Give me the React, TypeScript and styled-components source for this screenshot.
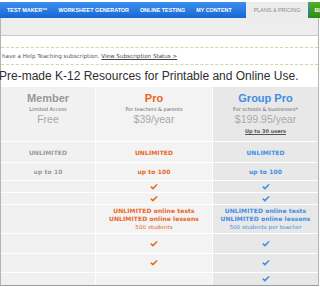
import React from 'react';
import styled, { createGlobalStyle } from 'styled-components';

const GlobalStyle = createGlobalStyle`
  html, body {
    margin: 0;
    padding: 0;
    background: #ffffff;
  }
  body {
    font-family: "DejaVu Sans", Verdana, sans-serif;
  }
`;

type Tone = 'member' | 'pro' | 'group';

const tones: Record<Tone, { bg: string; fg: string }> = {
  member: { bg: '#f1f1f1', fg: '#9a9a9a' },
  pro: { bg: '#f3f3f3', fg: '#e8661c' },
  group: { bg: '#e8e8e8', fg: '#3d8de4' },
};

function Check({ color }: { color: string }) {
  return (
    <svg width="8" height="6" viewBox="0 0 8 6">
      <path d="M0.3 3.2 L2.9 5.8 L7.7 0.7 L6.6 0 L2.9 3.5 L1.5 2.1 Z" fill={color} />
    </svg>
  );
}

function App() {
  const rows: { h: number; cells: (React.ReactNode | null)[] }[] = [
    { h: 21, cells: ['UNLIMITED', 'UNLIMITED', 'UNLIMITED'] },
    { h: 18, cells: ['up to 10', 'up to 100', 'up to 100'] },
    { h: 12, cells: [null, 'check', 'check'] },
    { h: 12, cells: [null, 'check', 'check'] },
    {
      h: 29,
      cells: [
        null,
        <>
          <Strong>UNLIMITED online tests</Strong>
          <Strong>UNLIMITED online lessons</Strong>
          <Small>500 students</Small>
        </>,
        <>
          <Strong>UNLIMITED online tests</Strong>
          <Strong>UNLIMITED online lessons</Strong>
          <Small>500 students per teacher</Small>
        </>,
      ],
    },
    { h: 20, cells: [null, 'check', 'check'] },
    { h: 19, cells: [null, 'check', 'check'] },
    { h: 13, cells: [null, null, 'check'] },
  ];
  const order: Tone[] = ['member', 'pro', 'group'];

  return (
    <>
      <GlobalStyle />
      <Page>
        <Nav>
          <Tab>TEST MAKER™</Tab>
          <Tab>WORKSHEET GENERATOR</Tab>
          <Tab>ONLINE TESTING</Tab>
          <Tab>MY CONTENT</Tab>
          <ActiveTab>PLANS &amp; PRICING</ActiveTab>
          <GreenTab>BL</GreenTab>
        </Nav>
        <Frame>
          <SubBar />
          <Spacer />
          <Notice>
            have a Help Teaching subscription. <NoticeLink>View Subscription Status &gt;</NoticeLink>
          </Notice>
          <Heading>Pre-made K-12 Resources for Printable and Online Use.</Heading>
          <Table>
            <HeadCell $tone="member">
              <PlanName $tone="member">Member</PlanName>
              <PlanFor>Limited Access</PlanFor>
              <Price>Free</Price>
            </HeadCell>
            <HeadCell $tone="pro">
              <PlanName $tone="pro">Pro</PlanName>
              <PlanFor>For teachers &amp; parents</PlanFor>
              <Price>$39/year</Price>
            </HeadCell>
            <HeadCell $tone="group">
              <PlanName $tone="group">Group Pro</PlanName>
              <PlanFor>For schools &amp; businesses*</PlanFor>
              <Price>$199.95/year</Price>
              <Users>Up to 30 users</Users>
            </HeadCell>
            {rows.map((row, ri) =>
              row.cells.map((c, ci) => (
                <Cell key={`${ri}-${ci}`} $tone={order[ci]} $h={row.h}>
                  {c === 'check' ? <Check color={tones[order[ci]].fg} /> : c}
                </Cell>
              )),
            )}
          </Table>
        </Frame>
      </Page>
    </>
  );
}
export default App;

const Page = styled.div`
  width: 320px;
  height: 287px;
  overflow: hidden;
  padding-top: 2px;
  box-sizing: border-box;
  background: #ffffff;
`;
const Nav = styled.div`
  height: 16px;
  display: flex;
  align-items: stretch;
  background: linear-gradient(#3c8ff0, #1a66d2);
  padding-left: 7px;
`;
const Tab = styled.div`
  display: flex;
  align-items: center;
  color: #ffffff;
  font-family: "Liberation Sans", Arial, sans-serif;
  font-weight: bold;
  font-size: 5.4px;
  margin-right: 11px;
  white-space: nowrap;
`;
const ActiveTab = styled.div`
  display: flex;
  align-items: center;
  background: #ececec;
  color: #8a8a8a;
  font-family: "Liberation Sans", Arial, sans-serif;
  font-size: 5.4px;
  padding: 0 8px;
  margin-left: 3px;
  white-space: nowrap;
`;
const GreenTab = styled.div`
  display: flex;
  align-items: center;
  flex: 1;
  background: linear-gradient(#4fb321, #2f8c10);
  color: #ffffff;
  font-family: "Liberation Sans", Arial, sans-serif;
  font-weight: bold;
  font-size: 5.4px;
  padding-left: 5px;
  margin-left: 1px;
  overflow: hidden;
`;
const Frame = styled.div`
  width: 319px;
  height: 268px;
  box-sizing: border-box;
  border-left: 1px solid #b4b4b4;
  border-right: 1px solid #b4b4b4;
  border-bottom: 1px solid #9c9c9c;
  display: flex;
  flex-direction: column;
`;
const SubBar = styled.div`
  height: 17px;
  background: #ededed;
  border-bottom: 1px solid #c8c8c8;
`;
const Spacer = styled.div`
  height: 11px;
  border-bottom: 1px dashed #c9dca6;
`;
const Notice = styled.div`
  height: 17px;
  box-sizing: border-box;
  padding: 5px 0 0 1px;
  font-size: 5.6px;
  color: #555555;
  border-bottom: 1px dashed #c9dca6;
  white-space: nowrap;
`;
const NoticeLink = styled.span`
  text-decoration: underline;
  color: #444444;
`;
const Heading = styled.div`
  height: 22px;
  line-height: 22px;
  margin-left: -2px;
  font-family: "Liberation Sans", Arial, sans-serif;
  font-size: 12px;
  color: #2e2e2e;
  white-space: nowrap;
`;
const Table = styled.div`
  display: grid;
  grid-template-columns: 94px 117px 106px;
`;
const HeadCell = styled.div<{ $tone: Tone }>`
  height: 54px;
  box-sizing: border-box;
  padding-top: 5px;
  display: flex;
  flex-direction: column;
  align-items: center;
  background: ${(p) => tones[p.$tone].bg};
  border-left: ${(p) => (p.$tone === 'member' ? 'none' : '1px solid #ffffff')};
`;
const PlanName = styled.div<{ $tone: Tone }>`
  font-family: "Liberation Sans", Arial, sans-serif;
  font-weight: bold;
  font-size: 11px;
  line-height: 12px;
  color: ${(p) => (p.$tone === 'member' ? '#999999' : tones[p.$tone].fg)};
`;
const PlanFor = styled.div`
  font-size: 5px;
  line-height: 8px;
  margin-top: 1px;
  color: #666666;
`;
const Price = styled.div`
  font-family: "Liberation Sans", Arial, sans-serif;
  font-size: 10.5px;
  line-height: 12px;
  color: #a8a8a8;
`;
const Users = styled.div`
  margin-top: 2px;
  font-size: 5px;
  font-weight: bold;
  line-height: 8px;
  color: #555555;
  text-decoration: underline;
`;
const Cell = styled.div<{ $tone: Tone; $h: number }>`
  height: ${(p) => p.$h}px;
  box-sizing: border-box;
  border-top: 1px solid #ffffff;
  border-left: ${(p) => (p.$tone === 'member' ? 'none' : '1px solid #ffffff')};
  background: ${(p) => tones[p.$tone].bg};
  color: ${(p) => tones[p.$tone].fg};
  display: flex;
  flex-direction: column;
  align-items: center;
  justify-content: center;
  font-size: 6px;
  font-weight: bold;
  letter-spacing: 0.1px;
  white-space: nowrap;
`;
const Strong = styled.div`
  font-size: 6px;
  font-weight: bold;
  line-height: 8px;
`;
const Small = styled.div`
  font-size: 5.5px;
  font-weight: normal;
  line-height: 8px;
`;
